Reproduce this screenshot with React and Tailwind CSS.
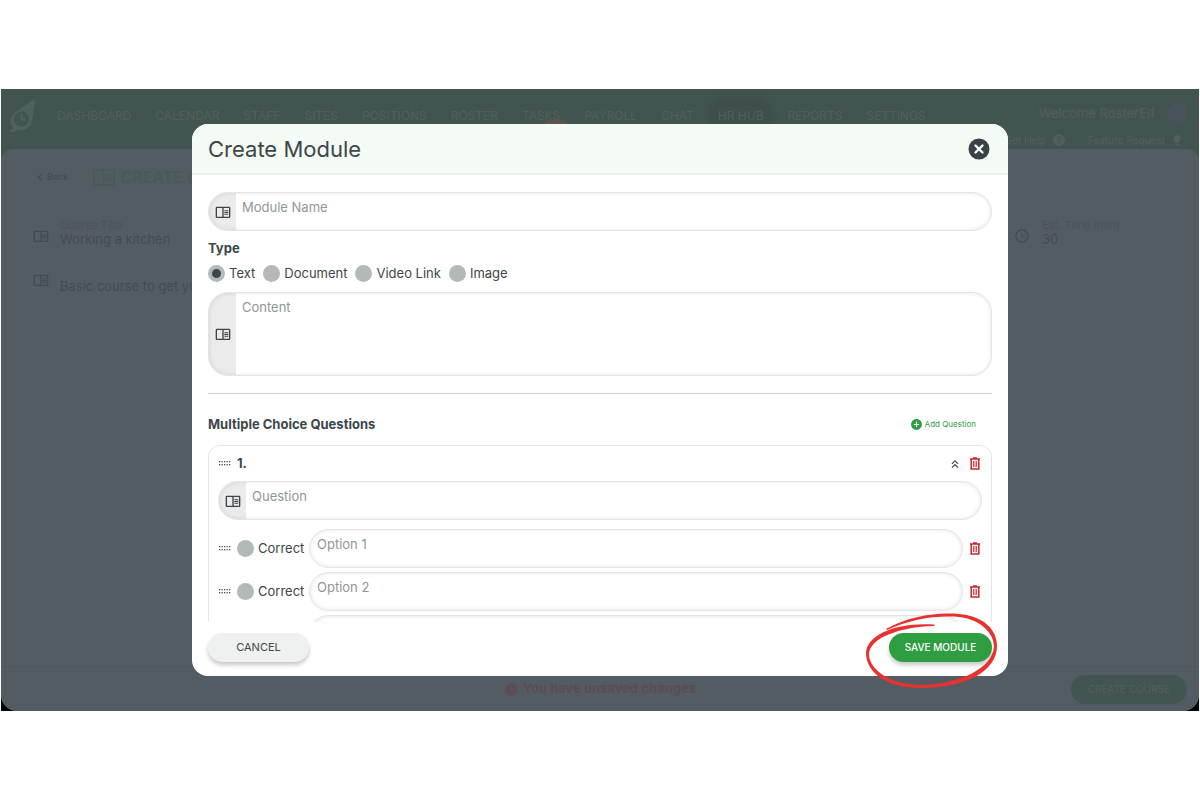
import { useState } from "react";
import {
  MdAddCircle,
  MdError,
  MdHelp,
  MdKeyboardDoubleArrowUp,
  MdLightbulb,
  MdOutlineChromeReaderMode,
  MdOutlineKeyboardArrowLeft,
  MdSchedule,
} from "react-icons/md";

const menu = [
  "DASHBOARD",
  "CALENDAR",
  "STAFF",
  "SITES",
  "POSITIONS",
  "ROSTER",
  "TASKS",
  "PAYROLL",
  "CHAT",
  "HR HUB",
  "REPORTS",
  "SETTINGS",
];

const moduleTypes = ["Text", "Document", "Video Link", "Image"];

const radioClass =
  "size-[17px] shrink-0 appearance-none rounded-full bg-[#b3b9b8] checked:border-4 checked:border-[#b3b9b8] checked:bg-[#3c464a]";

const fieldClass =
  "flex overflow-hidden border border-[#e3e4e4] bg-white shadow-[inset_0_0_4px_rgba(0,0,0,0.12)]";

function Logo() {
  return (
    <svg viewBox="0 0 28 36" className="h-9 w-7 shrink-0" fill="none">
      <path
        d="M26 1L8 13C2 17 0 24 3 29L4 30L0 33C3 35 7 34 9 32C16 33 22 29 23 23Z"
        fill="#4f615e"
      />
      <circle cx="12.500" cy="21" r="7.500" fill="#415450" />
      <path d="M12.500 16V21.500H17" stroke="#4f615e" strokeWidth="2" />
    </svg>
  );
}

function TrashIcon() {
  return (
    <svg viewBox="0 0 12 13" className="h-[13px] w-3" fill="none" stroke="#c9252b">
      <path d="M1 2H11M4 1H8" strokeWidth="1.500" />
      <path d="M2.200 2V12H9.800V2" strokeWidth="1.500" />
      <path d="M4.800 4V10M7.200 4V10" strokeWidth="1.200" />
    </svg>
  );
}

function DragHandle() {
  return (
    <svg viewBox="0 0 12 5" className="h-[5px] w-3 shrink-0" fill="#4b5357">
      {[0, 1, 2, 3, 4].map((i) => (
        <g key={i}>
          <rect x={i * 2.5} y="0" width="1.300" height="1.300" />
          <rect x={i * 2.5} y="3" width="1.300" height="1.300" />
        </g>
      ))}
    </svg>
  );
}

// Hand drawn ring around the save button
function PenCircle() {
  return (
    <svg
      viewBox="0 0 140 82"
      className="pointer-events-none absolute -top-[23px] -left-[28px] h-[82px] w-[140px]"
      fill="#e8322f"
    >
      <path d="M25 19C48 6 76 2 98 4C122 6 136 19 136 36C136 61 105 78 60 78C25 78 5 62 5 43C6 25 34 12 73 14.500C74 15 74 16 73 16C38 17 9 28 8 44C8 60 30 75 60 75C100 74 131 58 133 37C133 22 118 9 98 7C76 5 50 9 26 20Z" />
    </svg>
  );
}

function IconField({ label, multiline }) {
  const textClass =
    "min-w-0 flex-1 resize-none bg-transparent px-[6px] text-[13px] leading-5 text-[#3c464a] outline-none placeholder:text-[#8f9795]";
  return (
    <label
      className={`${fieldClass} ${multiline ? "h-[84px] rounded-[20px]" : "h-[39px] rounded-full"}`}
    >
      <span className="flex w-[27px] shrink-0 items-center justify-center bg-black/8 text-[#3c464a]">
        <MdOutlineChromeReaderMode className="size-4" />
      </span>
      {multiline ? (
        <textarea aria-label={label} placeholder={label} className={`${textClass} pt-1`} />
      ) : (
        <input
          type="text"
          aria-label={label}
          placeholder={label}
          className={`${textClass} pb-[9px]`}
        />
      )}
    </label>
  );
}

function OptionRow({ number, checked, onCheck }) {
  return (
    <div className="flex items-center">
      <DragHandle />
      <label className="ml-[6px] flex w-[72px] shrink-0 items-center gap-1 text-[13px] text-[#3c464a]">
        <input
          type="radio"
          name="correct"
          checked={checked}
          onChange={onCheck}
          className={radioClass}
        />
        Correct
      </label>
      <div className={`${fieldClass} h-[39px] flex-1 rounded-full`}>
        <input
          type="text"
          aria-label={`Option ${number}`}
          placeholder={`Option ${number}`}
          className="min-w-0 flex-1 bg-transparent px-[7px] pb-[9px] text-[13px] leading-5 outline-none placeholder:text-[#8f9795]"
        />
      </div>
      <button type="button" aria-label={`Delete option ${number}`} className="ml-[6px]">
        <TrashIcon />
      </button>
    </div>
  );
}

function CoursePage() {
  return (
    <div className="flex min-h-[622px] flex-col overflow-hidden rounded-b-2xl bg-[#415450]">
      <header className="flex h-[60px] items-start justify-between pr-3 pl-2 text-[#50605f]">
        <div className="flex items-center gap-5 pt-[9px]">
          <Logo />
          <nav className="flex gap-6 text-xs">
            {menu.map((item) => (
              <a
                key={item}
                href="#"
                className={
                  item === "HR HUB"
                    ? "rounded-full whitespace-nowrap bg-[#3e4f4c] shadow-[0_0_6px_10px_#3e4f4c]"
                    : "relative whitespace-nowrap"
                }
              >
                {item}
                {item === "TASKS" && (
                  <span className="absolute top-3 -right-2 h-3 w-6 rounded-full bg-[#5b544c]" />
                )}
              </a>
            ))}
          </nav>
        </div>
        <div className="flex flex-col items-end gap-[9px] pt-[14px]">
          <div className="flex items-center gap-3 text-[13px] leading-5">
            Welcome RosterElf
            <span className="size-5 rounded-full bg-[#48535c]" />
          </div>
          <div className="flex items-center gap-[6px] pr-1 text-[10px] leading-4">
            <a href="#">Get Help</a>
            <MdHelp className="size-[14px]" />
            <a href="#" className="ml-4">
              Feature Request
            </a>
            <MdLightbulb className="size-3" />
          </div>
        </div>
      </header>

      <main className="flex flex-1 flex-col rounded-t-xl bg-[#545c63] px-8 pt-4 text-[#434b52]">
        <div className="flex items-center gap-6">
          <button type="button" className="flex items-center text-[9px] font-medium">
            <MdOutlineKeyboardArrowLeft className="size-[14px]" />
            Back
          </button>
          <h1 className="flex items-center gap-1 text-base font-bold text-[#455c57]">
            <MdOutlineChromeReaderMode className="size-6" />
            CREATE COURSE
          </h1>
        </div>
        <div className="mt-[30px] flex justify-between text-[13px] leading-4">
          <div className="flex items-end gap-[11px]">
            <MdOutlineChromeReaderMode className="mb-[3px] size-4" />
            <div>
              <div className="text-[11px] leading-3 text-[#4b535a]">Course Title</div>
              Working a kitchen
            </div>
          </div>
          <div className="flex w-[153px] items-end gap-3">
            <MdSchedule className="mb-[3px] size-4" />
            <div>
              <div className="text-[11px] leading-3 text-[#4b535a]">Est. Time (min)</div>
              30
            </div>
          </div>
        </div>
        <div className="mt-[25px] flex gap-[11px] text-[13px] leading-4">
          <MdOutlineChromeReaderMode className="size-4" />
          <p className="pt-[6px]">Basic course to get you started</p>
        </div>
      </main>

      <footer className="grid h-[45px] grid-cols-3 items-center border-t border-[#50585f] bg-[#545c63] px-3">
        <p className="col-start-2 flex items-center justify-center gap-1 text-[13px] font-bold whitespace-nowrap text-[#5c4c55]">
          <MdError className="size-[15px]" />
          You have unsaved changes
        </p>
        <button
          type="button"
          className="h-[29px] w-[116px] justify-self-end rounded-full bg-[#425551] text-[10px] text-[#51615f]"
        >
          CREATE COURSE
        </button>
      </footer>
    </div>
  );
}

function CreateModule() {
  const [type, setType] = useState("Text");
  const [correct, setCorrect] = useState(null);

  return (
    <div
      role="dialog"
      aria-labelledby="module-title"
      className="flex h-[552px] w-[816px] max-w-full flex-col rounded-2xl bg-white text-[#3c464a]"
    >
      <div className="flex h-[51px] shrink-0 items-center justify-between rounded-t-2xl border-b-2 border-[#eef2ee] bg-[#f4faf4] pr-[18px] pl-4">
        <h2 id="module-title" className="pt-px text-[22px]">
          Create Module
        </h2>
        <button type="button" aria-label="Close">
          <svg viewBox="0 0 22 22" className="size-[22px]">
            <circle cx="11" cy="11" r="10.500" fill="#3a4248" />
            <path
              d="M7.500 7.500L14.500 14.500M14.500 7.500L7.500 14.500"
              stroke="#fff"
              strokeWidth="2.400"
              strokeLinecap="round"
            />
          </svg>
        </button>
      </div>

      <div className="min-h-0 flex-1 overflow-y-auto px-4 pt-[17px] [scrollbar-width:none]">
        <IconField label="Module Name" />

        <fieldset className="mt-[7px]">
          <legend className="text-[13px] leading-5 font-bold">Type</legend>
          <div className="mt-[5px] flex items-center gap-2 text-[13px] leading-5">
            {moduleTypes.map((item) => (
              <label key={item} className="flex items-center gap-1">
                <input
                  type="radio"
                  name="type"
                  checked={type === item}
                  onChange={() => setType(item)}
                  className={radioClass}
                />
                {item}
              </label>
            ))}
          </div>
        </fieldset>

        <div className="mt-[9px]">
          <IconField label="Content" multiline />
        </div>

        <hr className="mt-[17px] border-[#cfcfcf]" />

        <div className="mt-5 flex items-center justify-between pr-4">
          <h3 className="text-[13px] leading-5 font-bold">Multiple Choice Questions</h3>
          <button type="button" className="flex items-center gap-[2px] text-[8px] text-[#2e9e41]">
            <MdAddCircle className="size-[13px]" />
            Add Question
          </button>
        </div>

        {/* Question card */}
        <div className="mt-[11px] rounded-xl border border-[#e4e4e4] px-[9px] pb-3">
          <div className="flex h-[35px] items-center gap-[6px] pr-px pl-px">
            <DragHandle />
            <span className="text-[13px] font-bold">1.</span>
            <button type="button" aria-label="Collapse question" className="ml-auto">
              <MdKeyboardDoubleArrowUp className="size-[14px]" />
            </button>
            <button type="button" aria-label="Delete question" className="ml-px">
              <TrashIcon />
            </button>
          </div>
          <IconField label="Question" />
          <div className="mt-[9px] flex flex-col gap-1 pr-px pl-px">
            {[1, 2, 3].map((n) => (
              <OptionRow
                key={n}
                number={n}
                checked={correct === n}
                onCheck={() => setCorrect(n)}
              />
            ))}
          </div>
        </div>
      </div>

      <div className="flex h-[54px] shrink-0 items-start justify-between px-4 pt-[11px] text-[11px]">
        <button
          type="button"
          className="h-[29px] w-[101px] rounded-full bg-[#eff0f0] shadow-[0_3px_4px_rgba(0,0,0,0.22)]"
        >
          CANCEL
        </button>
        <div className="relative">
          <button
            type="button"
            className="h-[29px] w-[103px] rounded-full bg-[#2e9e41] text-[10px] font-medium text-white shadow-[0_3px_4px_rgba(0,0,0,0.22)]"
          >
            SAVE MODULE
          </button>
          <PenCircle />
        </div>
      </div>
    </div>
  );
}

export default function App() {
  return (
    <div className="bg-white px-px py-[89px] font-[Inter,sans-serif]">
      <div className="relative bg-black">
        <CoursePage />
        <div className="absolute inset-0 flex items-start justify-center pt-[35px]">
          <CreateModule />
        </div>
      </div>
    </div>
  );
}
